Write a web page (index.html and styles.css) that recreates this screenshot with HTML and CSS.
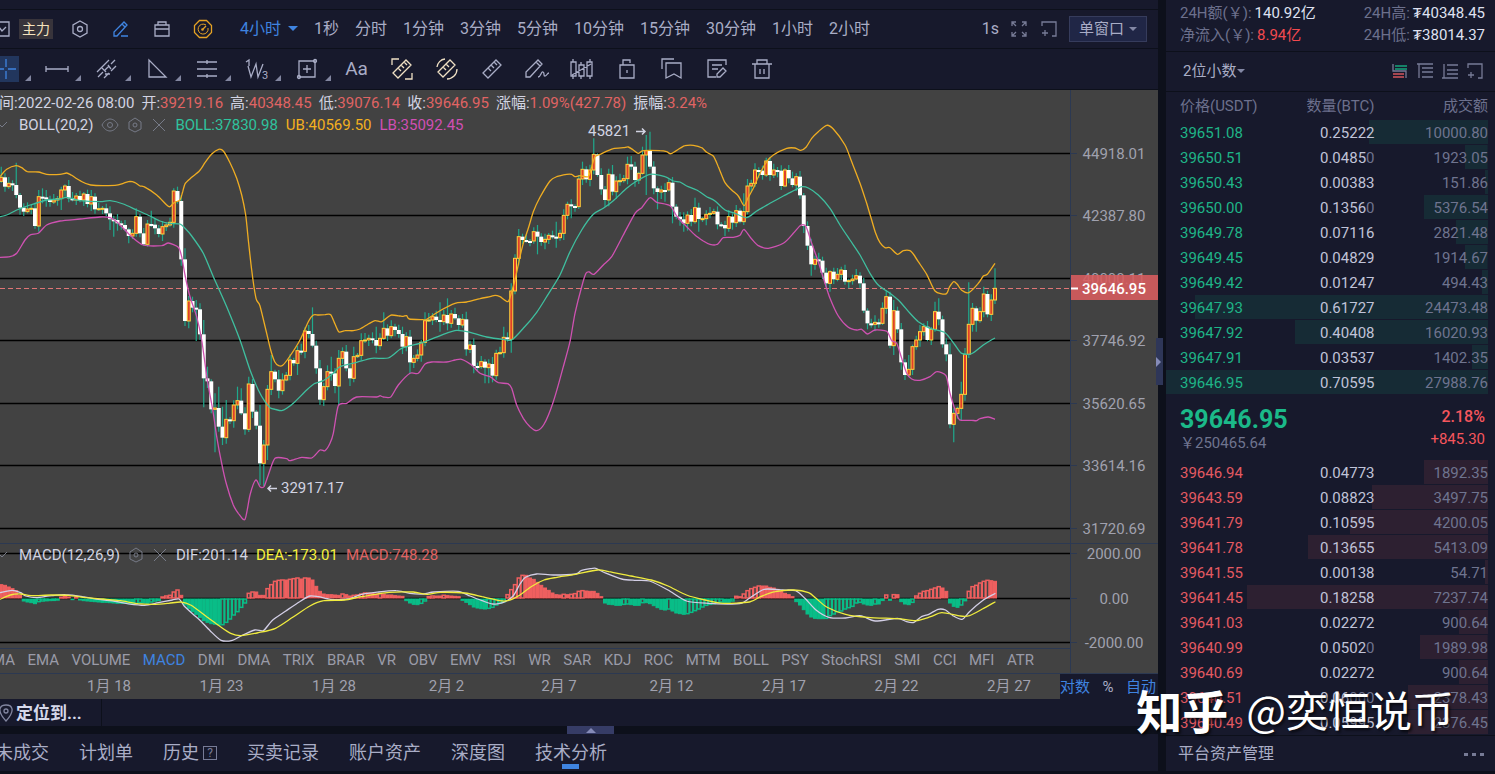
FILE: index.html
```html
<!DOCTYPE html>
<html lang="zh-CN">

<head>
    <meta charset="UTF-8">
    <meta name="viewport" content="width=device-width, initial-scale=1.0">
    <title>BTC/USDT</title>
    <link rel="stylesheet" href="styles.css">
</head>

<body>
    <div class="layout">
        <main class="left">
            <div class="top-strip"></div>

            <div class="toolbar">
                <button class="icon-btn cut" aria-label="指标"><svg width="18" height="16" viewBox="0 0 18 16"><path d="M1 1h16v14H1zM4 9l3-3 3 4 4-4"/></svg></button>
                <button class="main-force">主力</button>
                <div class="tools">
                    <button class="icon-btn" aria-label="设置"><svg width="18" height="18" viewBox="0 0 18 18"><path d="M9 1l7 4v8l-7 4-7-4V5z"/><circle cx="9" cy="9" r="2.5"/></svg></button>
                    <button class="icon-btn blue" aria-label="画线"><svg width="18" height="18" viewBox="0 0 18 18"><path d="M2 16v-4L12 2l3 3L5 16zM10 4l3 3M9 16h7"/></svg></button>
                    <button class="icon-btn" aria-label="模板"><svg width="18" height="18" viewBox="0 0 18 18"><path d="M2 5h14v11H2zM2 9h14M5 5V2h8v3"/></svg></button>
                    <button class="icon-btn gold" aria-label="预警"><svg width="20" height="20" viewBox="0 0 20 20"><path d="M6.500 1.500h7l5 5v7l-5 5h-7l-5-5v-7z"/><path class="thin" d="M13 6a5 5 0 1 0 2 3"/><path d="M10 10l3-3"/><circle cx="9.500" cy="10.500" r=".7"/></svg></button>
                </div>
                <nav class="periods">
                    <button class="active">4小时<i class="caret"></i></button>
                    <button>1秒</button>
                    <button>分时</button>
                    <button>1分钟</button>
                    <button>3分钟</button>
                    <button>5分钟</button>
                    <button>10分钟</button>
                    <button>15分钟</button>
                    <button>30分钟</button>
                    <button>1小时</button>
                    <button>2小时</button>
                </nav>
                <div class="window-tools">
                    <button>1s</button>
                    <button class="icon-btn dim" aria-label="全屏"><svg width="16" height="16" viewBox="0 0 16 16"><path d="M1 5V1h4M11 1h4v4M15 11v4h-4M5 15H1v-4M1 1l4 4M15 1l-4 4M15 15l-4-4M1 15l4-4"/></svg></button>
                    <button class="icon-btn dim" aria-label="新窗口"><svg width="16" height="16" viewBox="0 0 16 16"><path d="M1 5V1h14v14h-4M4 9v6M1 12h6"/></svg></button>
                    <label class="select boxed"><select aria-label="窗口"><option>单窗口</option></select><i class="caret"></i></label>
                </div>
            </div>

            <div class="toolbar draw-bar">
                <button class="draw first on" aria-label="十字线"><svg width="19" height="26" viewBox="0 0 19 26"><path d="M6 3v8M6 15v8M0 13h4M8 13h8"/></svg></button>
                <button class="draw more" aria-label="线段"><svg width="24" height="24" viewBox="0 0 24 24"><path d="M1 12h22M1 9v6M23 9v6"/></svg></button>
                <button class="draw more" aria-label="平行线"><svg width="24" height="24" viewBox="0 0 24 24"><path d="M2 15L14 3M3 20l5-5M10 13l4-4M16 7l4-4M9 21l5-5M16 14l5-5M7 11l4 4M13 8l3 4M10 17h5"/></svg></button>
                <button class="draw more" aria-label="三角形"><svg width="24" height="24" viewBox="0 0 24 24"><path d="M4 3v17h17z"/></svg></button>
                <button class="draw more" aria-label="斐波那契"><svg width="24" height="24" viewBox="0 0 24 24"><path d="M2 5h20M2 12h20M2 19h20M12 3v4M12 17v4"/></svg></button>
                <button class="draw more" aria-label="波浪"><svg width="26" height="24" viewBox="0 0 26 24"><path d="M2 5l3-2v6M4 9l3 11 5-13 2 13 5-13"/><text x="18" y="22" class="sub">3</text></svg></button>
                <button class="draw more" aria-label="矩形"><svg width="24" height="24" viewBox="0 0 24 24"><path d="M4 4h16v16H4zM12 8v8M8 12h8"/><circle cx="20" cy="4" r="1.500"/><circle cx="4" cy="20" r="1.500"/></svg></button>
                <div class="draw-simple">
                    <button class="draw aa">Aa</button>
                    <button class="draw cream" aria-label="测量区间"><svg width="24" height="24" viewBox="0 0 24 24"><path d="M2 8V2h7M22 16v6h-7M3 16L16 3l5 5L8 21zM8 11l3 3M11 8l3 3M14 5l3 3"/></svg></button>
                    <button class="draw cream" aria-label="测量圆"><svg width="24" height="24" viewBox="0 0 24 24"><path d="M3 15L15 3l5 5L8 20zM8 10l3 3M11 7l3 3M2 10a9 9 0 0 1 8-8M22 12a10 10 0 0 1-10 10"/></svg></button>
                    <button class="draw" aria-label="尺子"><svg width="24" height="24" viewBox="0 0 24 24"><path d="M3 16L16 3l5 5L8 21zM8 11l3 3M11 8l3 3M14 5l3 3"/></svg></button>
                    <button class="draw" aria-label="画笔"><svg width="26" height="24" viewBox="0 0 26 24"><path d="M2 20v-5L14 3l4 4L6 20zM12 5l4 4M14 20c3 0 3-6 5-5s0 4 2 4 2-3 4-3"/></svg></button>
                    <button class="draw" aria-label="K线形态"><svg width="24" height="24" viewBox="0 0 24 24"><path d="M1 5h5v14H1zM9 8h5v11H9zM17 5h5v14h-5zM3 2v3M3 19v3M11 5v3M11 19v3M20 2v3M20 19v3M2 18L21 7"/></svg></button>
                    <button class="draw" aria-label="锁定"><svg width="24" height="24" viewBox="0 0 24 24"><path d="M5 8h14v13H5zM8 8V3h7v3M12 13v3"/></svg></button>
                    <button class="draw" aria-label="书签"><svg width="24" height="24" viewBox="0 0 24 24"><path d="M6 6h15v15l-7-4-8 4zM2 12V2h12"/></svg></button>
                    <button class="draw" aria-label="笔记"><svg width="24" height="24" viewBox="0 0 24 24"><path d="M21 8V3H3v17h8M7 8h10M7 12h6M12 20v-3l6-6 3 3-6 6z"/></svg></button>
                    <button class="draw" aria-label="删除"><svg width="24" height="24" viewBox="0 0 24 24"><path d="M2 7h20M5 7v14h14V7M7 7V3h10v4M10 12v5M14 12v5"/></svg></button>
                </div>
            </div>

            <section class="chart">
                <div class="plot">
                    <svg id="pricePlot" class="plot-svg"></svg>
                    <div class="legend">
                        <p class="ohlc">
                            <span>间:2022-02-26 08:00</span>
                            <span>开:<b>39219.16</b></span>
                            <span>高:<b>40348.45</b></span>
                            <span>低:<b>39076.14</b></span>
                            <span>收:<b>39646.95</b></span>
                            <span>涨幅:<b>1.09%(427.78)</b></span>
                            <span>振幅:<b>3.24%</b></span>
                        </p>
                        <p>
                            <svg class="tick" width="11" height="8" viewBox="0 0 11 8"><path d="M0 4l2 2 5-5"/></svg>
                            <span>BOLL(20,2)</span>
                            <svg width="18" height="16" viewBox="0 0 18 16"><path d="M1 8c4-8 12-8 16 0-4 8-12 8-16 0z"/><circle cx="9" cy="8" r="2.500"/></svg>
                            <svg width="16" height="16" viewBox="0 0 16 16"><path d="M8 1l6 4v7l-6 3-6-3V5z"/><circle cx="8" cy="8" r="2"/></svg>
                            <svg width="16" height="16" viewBox="0 0 16 16"><path d="M2 2l12 12M14 2L2 14"/></svg>
                            <span class="mid">BOLL:37830.98</span>
                            <span class="ub">UB:40569.50</span>
                            <span class="lb">LB:35092.45</span>
                        </p>
                    </div>
                </div>
                <svg id="priceAxis" class="axis-svg"></svg>

                <div class="plot macd">
                    <svg id="macdPlot" class="plot-svg"></svg>
                    <div class="legend">
                        <p>
                            <svg class="tick" width="11" height="8" viewBox="0 0 11 8"><path d="M0 4l2 2 5-5"/></svg>
                            <span>MACD(12,26,9)</span>
                            <svg width="16" height="16" viewBox="0 0 16 16"><path d="M8 1l6 4v7l-6 3-6-3V5z"/><circle cx="8" cy="8" r="2"/></svg>
                            <svg width="16" height="16" viewBox="0 0 16 16"><path d="M2 2l12 12M14 2L2 14"/></svg>
                            <span>DIF:201.14</span>
                            <span class="dea">DEA:-173.01</span>
                            <span class="red">MACD:748.28</span>
                        </p>
                    </div>
                </div>
                <svg id="macdAxis" class="axis-svg macd"></svg>

                <nav class="indicators">
                    <button>MA</button><button>EMA</button><button>VOLUME</button><button class="active">MACD</button><button>DMI</button><button>DMA</button><button>TRIX</button><button>BRAR</button><button>VR</button><button>OBV</button><button>EMV</button><button>RSI</button><button>WR</button><button>SAR</button><button>KDJ</button><button>ROC</button><button>MTM</button><button>BOLL</button><button>PSY</button><button>StochRSI</button><button>SMI</button><button>CCI</button><button>MFI</button><button>ATR</button>
                </nav>
                <div class="axis-foot"></div>
            </section>
            <div class="dates">
                <svg id="dateAxis"></svg>
                <div class="scale">
                    <button class="active">对数</button>
                    <button>%</button>
                    <button class="active">自动</button>
                </div>
            </div>

            <div class="locate">
                <button><svg width="14" height="18" viewBox="0 0 14 18"><path d="M6 17C-4 6 0 1 6 1s10 5 0 16z"/><circle cx="6" cy="7" r="2"/></svg>定位到...</button>
            </div>
            <div class="splitter"><button class="fold" aria-label="展开"><i></i></button></div>
            <nav class="tabs">
                <button>未成交</button>
                <button>计划单</button>
                <button>历史<span class="help">?</span></button>
                <button>买卖记录</button>
                <button>账户资产</button>
                <button>深度图</button>
                <button class="active">技术分析</button>
            </nav>
        </main>

        <div class="gutter"><button class="side-fold" aria-label="收起"><i></i></button></div>

        <aside class="book">
            <dl class="stats">
                <div><dt>24H额(￥):</dt><dd>140.92亿</dd></div>
                <div><dt>24H高:</dt><dd>₮40348.45</dd></div>
                <div><dt>净流入(￥):</dt><dd class="down">8.94亿</dd></div>
                <div><dt>24H低:</dt><dd>₮38014.37</dd></div>
            </dl>
            <div class="precision">
                <label class="select"><select aria-label="小数位"><option>2位小数</option></select><i class="caret"></i></label>
                <div class="book-views">
                    <button aria-label="买卖盘"><svg width="16" height="16" viewBox="0 0 16 16"><path class="g" d="M3 3h12M3 6h12"/><path d="M1 1v7h13v7"/><path class="r" d="M1 11h11M1 14h11"/></svg></button>
                    <button aria-label="买盘"><svg width="16" height="16" viewBox="0 0 16 16"><path d="M0 1h16M2 1v14M5 5h11M5 9h11M5 14h11"/></svg></button>
                    <button aria-label="卖盘"><svg width="16" height="16" viewBox="0 0 16 16"><path d="M2 1v14M0 15h16M5 2h11M5 7h11M5 11h11"/></svg></button>
                    <button aria-label="新窗口"><svg width="16" height="16" viewBox="0 0 16 16"><path d="M1 5V1h14v14h-4M4 9v6M1 12h6"/></svg></button>
                </div>
            </div>
            <table class="orders">
                <thead>
                    <tr>
                        <th>价格(USDT)</th>
                        <th>数量(BTC)</th>
                        <th>成交额</th>
                    </tr>
                </thead>
                <tbody id="asks" class="asks"></tbody>
            </table>
            <div class="last">
                <div>
                    <strong>39646.95</strong>
                    <span>￥250465.64</span>
                </div>
                <div class="change">
                    <b>2.18%</b>
                    <span>+845.30</span>
                </div>
            </div>
            <table class="orders">
                <tbody id="bids" class="bids"></tbody>
            </table>
            <div class="assets">
                <span>平台资产管理</span>
                <button aria-label="更多"><i></i><i></i><i></i></button>
            </div>
        </aside>

        <div class="watermark"><b>知乎</b><span>@奕恒说币</span></div>
    </div>

    <script src="chart.js"></script>
</body>

</html>
```

FILE: styles.css
```css
* {
    box-sizing: border-box;
}

body {
    margin: 0;
    background-color: #0d101b;
    color: #a9adc6;
    font-family: Roboto, "Noto Sans CJK SC", sans-serif;
    font-size: 15px;
    line-height: 20px;
    overflow-x: hidden;
}

button,
select {
    font: inherit;
    color: inherit;
    background: none;
    border: none;
    padding: 0;
    margin: 0;
    white-space: nowrap;
    cursor: pointer;
}

select {
    appearance: none;
}

p,
dl,
dd {
    margin: 0;
}

svg {
    display: block;
    flex: none;
}

button svg,
.legend p svg {
    fill: none;
    stroke: currentColor;
    stroke-width: 1.3;
}

.layout {
    position: relative;
    display: grid;
    grid-template-columns: minmax(0, 1fr) 8px 329px;
    overflow: hidden;
}

.left {
    min-width: 0;
}

.caret {
    display: inline-block;
    border: 5px solid transparent;
    border-top-color: currentColor;
    border-bottom: none;
}

/* toolbars */
.top-strip {
    height: 10px;
    background-color: #17192c;
    border-bottom: 1px solid #0d101b;
}

.toolbar {
    display: flex;
    align-items: center;
    height: 39px;
    background-color: #17192c;
    border-bottom: 1px solid #0d101b;
    font-size: 16px;
}

.icon-btn {
    display: flex;
    align-items: center;
    justify-content: center;
    width: 20px;
}

.cut {
    margin-left: -9px;
}

.main-force {
    height: 20px;
    margin-left: 8px;
    padding: 0 3px;
    background-color: #38343b;
    color: #f5e3bd;
    font-size: 14px;
}

.tools {
    display: flex;
    gap: 21px;
    margin-left: 17px;
}

.tools .thin {
    stroke-width: 1;
}

.blue,
.active {
    color: #3f84e0;
}

.gold {
    color: #e5a224;
}

.dim {
    color: #777b96;
}

.periods {
    display: flex;
    gap: 16px;
    margin-left: 27px;
}

.periods .caret {
    margin-left: 7px;
    vertical-align: 3px;
}

.window-tools {
    display: flex;
    align-items: center;
    gap: 10px;
    margin-left: auto;
    margin-right: 11px;
}

.select {
    display: flex;
    align-items: center;
}

.select .caret {
    border-width: 4px;
    border-bottom: none;
    color: #8388a5;
    pointer-events: none;
}

.boxed {
    height: 26px;
    padding: 0 9px;
    gap: 4px;
    background-color: #202646;
    border: 1px solid #363c5c;
}

.boxed select {
    font-size: 15px;
}

.draw-bar {
    height: 41px;
}

.draw {
    position: relative;
    display: flex;
    align-items: center;
    justify-content: center;
    width: 45px;
    height: 40px;
}

.more {
    width: 50px;
}

.first {
    width: 32px;
    justify-content: flex-start;
}

.first svg {
    background-color: #22365d;
    color: #3f84e0;
}

.first::after,
.more::after {
    content: "";
    position: absolute;
    right: 1px;
    bottom: 8px;
    border: 3px solid #8286a0;
    border-top-color: transparent;
    border-left-color: transparent;
}

.draw-simple {
    display: flex;
    margin-left: 2px;
}

.aa {
    font-size: 19px;
}

.sub {
    font-size: 11px;
    fill: currentColor;
    stroke: none;
}

.cream {
    color: #efe0c4;
}

/* chart */
.chart {
    display: grid;
    grid-template-columns: minmax(0, 1fr) 87px;
    background-color: #424242;
}

.plot {
    position: relative;
    height: 453px;
    overflow: hidden;
    border-right: 1px solid #2c3952;
}

.plot-svg {
    width: 100%;
    height: 100%;
}

.axis-svg {
    width: 87px;
    height: 453px;
    overflow: visible;
}

.plot.macd,
.axis-svg.macd {
    height: 105px;
    border-top: 1px solid #2c3952;
}

.legend {
    position: absolute;
    top: 2px;
    left: 0;
    color: #d2d4e2;
}

.macd .legend {
    top: 0;
}

.legend p {
    display: flex;
    align-items: center;
    gap: 8px;
    height: 22px;
    white-space: nowrap;
}

.legend b {
    color: #e06464;
    font-weight: normal;
}

.legend p svg {
    color: #777b88;
    stroke-width: 1;
}

.legend .ohlc {
    gap: 7px;
    margin-left: -1px;
}

.mid {
    color: #2fc39e;
}

.ub {
    color: #f3b01f;
}

.lb {
    color: #d04fb4;
}

.dea {
    color: #f6f03c;
}

.red {
    color: #e06464;
}

.up-candle {
    fill: #e0402a;
    stroke: #ffd23c;
}

.down-candle {
    fill: #fff;
}

.wick {
    stroke: #1fa98c;
    stroke-width: 1.2;
}

.grid {
    stroke: #000;
    stroke-width: 1.5;
}

.notch {
    stroke: #2c3952;
}

.line {
    fill: none;
    stroke-width: 1.3;
}

.line-upper {
    stroke: #efad22;
}

.line-middle {
    stroke: #3fbf9f;
}

.line-lower {
    stroke: #cf52b2;
}

.line-dif {
    stroke: #d3cfe6;
}

.line-dea {
    stroke: #f0ec3e;
}

.now-line {
    stroke: #e07575;
    stroke-dasharray: 5 3;
}

.hist-up {
    fill: #ef5f5f;
    stroke: #ef5f5f;
}

.hist-down {
    fill: #09bd87;
    stroke: #09bd87;
}

.hist-up.hollow,
.hist-down.hollow {
    fill: #424242;
    stroke-width: 1.5;
}

.mark-text {
    fill: #d2d4e2;
}

.mark-arrow {
    fill: none;
    stroke: #d2d4e2;
    stroke-width: 1.5;
}

.axis-text {
    fill: #a0a1ae;
    text-anchor: middle;
}

.now-tag {
    fill: #d95c5e;
    fill-opacity: .88;
}

.now-text {
    fill: #fff;
    font-weight: 500;
    text-anchor: middle;
}

.now-tick {
    stroke: #fff;
    stroke-width: 2;
}

.indicators {
    display: flex;
    justify-content: space-between;
    height: 25px;
    margin-left: -8px;
    padding: 0 36px 2px 0;
    border-top: 1px solid #2c3952;
    border-right: 1px solid #2c3952;
    color: #9a9ba8;
    overflow: hidden;
}

.indicators .active {
    color: #3f84e0;
}

.dates {
    display: flex;
    height: 26px;
    background-color: #424242;
    border-top: 1px solid #2c3952;
}

#dateAxis {
    flex: 1;
    width: 0;
    height: 25px;
}

.scale {
    display: flex;
    justify-content: space-between;
    width: 98px;
    padding-right: 2px;
    background-color: #17192c;
}

.scale button {
    font-size: 15px;
}

/* bottom */
.locate {
    display: flex;
    height: 27px;
    background-color: #17192c;
}

.locate button {
    display: flex;
    align-items: center;
    gap: 2px;
    width: 102px;
    border-right: 1px solid #0d101b;
    color: #d5d8ea;
    font-size: 17px;
    font-weight: bold;
}

.locate svg {
    color: #8286a0;
}

.splitter {
    position: relative;
    height: 8px;
}

.fold {
    position: absolute;
    left: 49%;
    width: 47px;
    height: 8px;
    background-color: #363c66;
    display: flex;
    align-items: center;
    justify-content: center;
}

.fold i {
    border: 5px solid transparent;
    border-bottom-color: #858bb8;
    border-top: none;
}

.tabs {
    display: flex;
    gap: 30px;
    height: 37px;
    margin-left: -5px;
    background-color: #17192c;
    font-size: 18px;
}

.tabs button {
    position: relative;
    display: flex;
    align-items: center;
}

.tabs .active {
    color: #a9adc6;
}

.tabs .active::after {
    content: "";
    position: absolute;
    left: 50%;
    bottom: 2px;
    width: 17px;
    height: 5px;
    margin-left: -9px;
    background-color: #3f84e0;
}

.help {
    width: 14px;
    height: 14px;
    margin-left: 4px;
    border: 1px solid #777b96;
    color: #777b96;
    font-size: 12px;
    line-height: 13px;
}

.gutter {
    position: relative;
}

.side-fold {
    position: absolute;
    top: 338px;
    left: -2px;
    width: 7px;
    height: 47px;
    background-color: #2e3658;
}

.side-fold i {
    display: block;
    width: 0;
    border: 5px solid transparent;
    border-left-color: #858bb8;
    border-right: none;
}

/* order book */
.book {
    background-color: #17192c;
    height: 771px;
}

.stats {
    display: grid;
    grid-template-columns: auto auto;
    justify-content: space-between;
    align-content: start;
    row-gap: 2px;
    height: 52px;
    padding: 3px 10px 0 14px;
    border-bottom: 1px solid #0d101b;
}

.stats div {
    display: flex;
    gap: 3px;
    height: 20px;
}

.stats dt,
.orders th {
    color: #6c708c;
}

.stats dd {
    color: #dfe1f0;
}

.stats .down {
    color: #f2494f;
}

.precision {
    display: flex;
    align-items: center;
    justify-content: space-between;
    height: 40px;
    padding: 0 12px 2px 17px;
    border-bottom: 1px solid #0d101b;
}

.book-views {
    display: flex;
    gap: 9px;
    color: #777b96;
}

.book-views .g {
    stroke: #17a57c;
}

.book-views .r {
    stroke: #d6565c;
}

.orders {
    width: 322px;
    border-collapse: collapse;
    table-layout: fixed;
}

.orders th,
.orders td {
    height: 25px;
    padding: 0;
    font-weight: normal;
    text-align: right;
}

.orders thead th {
    height: 28px;
}

.orders th:first-child,
.orders td:first-child {
    padding-left: 14px;
    text-align: left;
}

.orders th:nth-child(2),
.orders td:nth-child(2) {
    width: 95px;
}

.orders td:nth-child(2) {
    color: #c0c3d8;
}

.orders td:nth-child(3) {
    color: #6f748f;
}

.orders i {
    color: #6f748f;
    font-style: normal;
}

.asks tr {
    background: linear-gradient(#162b35, #162b35) right top / var(--depth) 24px no-repeat;
}

.bids tr {
    background: linear-gradient(#2d2031, #2d2031) right top / var(--depth) 24px no-repeat;
}

.asks td:first-child {
    color: #1fb487;
}

.bids td:first-child {
    color: #e35a62;
}

.last {
    display: flex;
    justify-content: space-between;
    height: 65px;
    padding: 12px 10px 0 14px;
}

.last div {
    display: flex;
    flex-direction: column;
}

.last strong {
    color: #1bb989;
    font-size: 25px;
    font-weight: bold;
    line-height: 26px;
}

.last span {
    color: #6f748f;
}

.last .change {
    text-align: right;
    gap: 2px;
}

.change b {
    color: #f6565d;
    font-size: 16px;
    font-weight: 500;
}

.last .change span {
    color: #f6565d;
}

.assets {
    display: flex;
    align-items: center;
    justify-content: space-between;
    height: 37px;
    padding: 0 11px 0 12px;
    background-color: #17192c;
    border-top: 1px solid #0d101b;
    font-size: 16px;
}

.assets button {
    display: flex;
    gap: 4px;
}

.assets i {
    width: 4px;
    height: 3px;
    background-color: #777b96;
}

.watermark {
    position: absolute;
    right: 41px;
    bottom: 32px;
    display: flex;
    align-items: center;
    gap: 18px;
    color: #fff;
    font-family: "Noto Sans CJK SC", sans-serif;
    font-size: 42px;
    line-height: 60px;
    text-shadow: 2px 2px 3px rgba(0, 0, 0, .7);
    pointer-events: none;
}

.watermark b {
    font-size: 46px;
}
```

FILE: chart.js
```js
const NS = 'http://www.w3.org/2000/svg';
const FIRST_X = 1.25;
const STEP = 3.75;

// levels in thirds of a pixel, from the top down
const closes = [
    112, 140, 130, 135, 165, 203, 215, 207, 205, 258, 170, 172, 178, 186, 180, 176, 150, 138, 175, 180,
    168, 180, 162, 192, 170, 208, 206, 205, 220, 238, 240, 250, 255, 268, 288, 280, 230, 280, 313, 252,
    254, 265, 282, 260, 255, 247, 153, 183, 358, 543, 483, 503, 508, 583, 715, 724, 808, 804, 860, 893,
    838, 842, 795, 782, 820, 868, 732, 815, 857, 970, 915, 748, 695, 718, 752, 720, 706, 660, 670, 632,
    634, 573, 582, 617, 685, 779, 740, 695, 700, 738, 655, 635, 685, 715, 650
].map(v => v + 90).concat([
    736, 692, 690, 685, 690, 707, 685, 655, 677, 650, 660, 672, 710, 680, 757, 745, 735, 697, 632, 630,
    620, 630, 635, 615, 640, 612, 625, 645, 628, 718, 705, 768, 770, 755, 773, 762, 797, 730, 728, 682,
    688, 543, 445, 380, 390, 393, 393, 365, 380, 396, 388, 376, 380, 383, 370, 316, 283, 288, 290, 207,
    178, 208, 180, 133, 195, 238, 270, 193, 245, 213, 212, 206, 163, 170, 210, 190, 135, 122, 170, 235,
    246, 240, 240, 218, 290, 320, 328, 340, 315, 335, 293, 327, 326, 313, 310, 305, 343, 345, 355, 320,
    338, 302, 335, 305, 228, 220, 180, 182, 195, 153, 195, 180, 182, 228, 180, 205, 225, 200, 256, 348,
    407, 463, 448, 452, 488, 520, 485, 508, 493, 480, 515, 512, 507, 497, 520, 602, 640, 643, 637, 640,
    595, 560, 707, 602, 658, 757, 795, 778, 710, 690, 665, 650, 690, 658, 605, 628, 703, 733, 943, 910,
    895, 853, 733, 643, 595, 632, 605, 552, 613, 570, 535
]);

// [high, low] of the candles with long wicks, null = short one
const wicks = {
    0: [170, null], 4: [158, null], 10: [240, 365], 11: [235, 280], 12: [240, null], 16: [230, 300],
    18: [210, null], 29: [null, 360], 30: [null, 380], 34: [null, 400], 36: [295, 380], 39: [330, 410],
    40: [302, null], 46: [235, null], 47: [230, null], 49: [415, 648], 51: [560, null], 52: [570, 693],
    53: [580, null], 54: [630, 892], 55: [770, null], 57: [850, 1027], 58: [830, null], 59: [890, 1005],
    60: [870, null], 63: [830, null], 64: [835, null], 66: [800, null], 69: [885, 1125], 70: [990, 1128],
    71: [825, 1050], 72: [735, null], 74: [780, 865], 79: [null, 795], 83: [592, null], 85: [750, 885],
    88: [740, null], 89: [null, 850], 90: [720, 885], 93: [null, 828], 94: [710, null], 96: [670, null],
    100: [650, 730], 102: [607, null], 107: [650, null], 109: [null, 790], 113: [607, null],
    117: [577, 665], 119: [565, null], 124: [605, null], 129: [null, 820], 130: [null, 820],
    134: [650, null], 136: [520, 728], 138: [357, null], 143: [null, 433], 148: [335, 413],
    152: [null, 325], 155: [155, null], 158: [85, null], 159: [130, null], 161: [null, 290],
    163: [165, null], 167: [140, null], 168: [138, null], 171: [110, null], 172: [75, 255],
    173: [65, null], 175: [null, 298], 177: [null, 275], 179: [null, 340], 182: [null, 365],
    185: [263, null], 186: [null, 365], 193: [null, 378], 198: [250, 345], 201: [160, null],
    204: [143, null], 208: [null, 240], 210: [165, null], 216: [null, 497], 218: [428, null],
    219: [440, null], 221: [null, 545], 224: [470, null], 236: [540, null], 238: [570, 735],
    241: [null, 810], 242: [735, null], 245: [645, null], 249: [575, null], 250: [565, null],
    253: [700, 955], 254: [null, 997], 256: [815, 930], 258: [517, null], 260: [null, 665],
    262: [530, null], 265: [475, null]
};

const bands = {
    upper: [
        [0, 50, [0,110, 20,88, 48,77, 65,83, 82,95, 115,96, 140,103, 180,103, 200,99, 215,106, 240,122, 272,135, 345,136, 370,130, 390,124, 405,128, 420,138, 432,140, 470,165, 500,195, 510,200, 522,188, 540,180, 548,155, 556,130, 575,112, 598,93, 615,68, 635,42, 656,28, 670,33, 690,68, 710,115, 725,165, 737,225, 745,300, 755,390, 768,475, 780,498, 800,580, 812,630, 824,665, 836,677, 848,676, 870,648, 900,600, 925,545, 940,525, 955,525, 975,524, 992,524, 1005,552, 1017,576]],
        [340, 20, [15,662, 40,662, 60,657, 85,642, 105,632, 125,635, 145,620, 155,615, 180,618, 190,619, 200,617, 208,627, 250,629, 260,628, 300,602, 345,580, 380,576, 420,566, 450,560, 465,556, 480,560, 504,575, 515,545, 525,510, 540,440, 550,400, 565,355, 580,305, 600,262, 630,213, 650,200, 680,193, 695,193, 705,200, 720,197, 745,200, 755,170, 765,140, 780,133, 820,116, 850,113, 865,111, 880,120, 895,130, 910,122, 960,122, 980,125, 993,131]],
        [680, 20, [0,115, 15,107, 40,106, 65,113, 80,127, 100,138, 115,170, 135,218, 155,240, 175,258, 192,287, 205,262, 220,235, 235,200, 260,155, 280,135, 320,115, 345,114, 362,121, 378,112, 395,85, 415,65, 440,46, 460,57, 495,105, 515,155, 540,220, 560,280, 575,330, 587,370, 600,398, 615,413, 630,413, 652,433, 670,422, 690,422, 702,435, 715,455, 740,493, 765,543, 798,552, 808,532, 821,515, 832,523, 845,541, 866,548, 895,520, 910,498, 922,493, 945,460]]
    ],
    middle: [
        [0, 50, [0,230, 20,225, 50,210, 90,195, 140,180, 180,177, 200,172, 240,182, 300,185, 330,182, 370,192, 410,210, 450,228, 480,243, 510,250, 540,252, 555,265, 575,288, 610,340, 640,410, 680,500, 720,600, 750,690, 775,750, 795,785, 810,803, 825,808, 845,812, 860,805, 885,785, 920,750, 945,730, 970,722, 1000,700]],
        [340, 20, [0,770, 50,757, 95,745, 145,744, 180,718, 210,707, 250,697, 310,673, 350,661, 390,667, 440,681, 490,688, 515,690, 550,655, 590,607, 620,560, 660,495, 690,425, 725,360, 760,313, 790,295, 820,272, 860,235, 890,213, 930,193, 975,200, 1000,213]],
        [680, 20, [0,216, 20,228, 50,240, 80,260, 105,273, 135,300, 165,310, 200,323, 230,303, 270,280, 310,258, 345,240, 365,230, 385,234, 415,255, 450,295, 480,345, 510,390, 540,435, 570,490, 595,525, 630,550, 660,575, 690,610, 715,635, 750,655, 795,668, 825,705, 845,730, 875,731, 910,705, 930,692, 945,684]]
    ],
    lower: [
        [0, 50, [0,352, 30,350, 50,340, 75,300, 92,284, 115,280, 140,255, 180,243, 240,237, 300,231, 330,233, 350,245, 370,265, 395,290, 430,315, 485,317, 505,309, 535,322, 545,350, 555,405, 570,470, 590,530, 605,600, 622,720, 640,820, 650,890, 665,970, 680,1035, 700,1095, 715,1120, 735,1138, 750,1065, 767,1020, 780,1040, 792,1040, 805,1005, 825,955, 860,956, 870,962, 905,952, 935,954, 960,930, 975,932, 990,910, 1000,880, 1015,797]],
        [340, 20, [20,880, 50,861, 110,861, 120,857, 130,861, 152,861, 175,825, 210,790, 235,790, 255,762, 275,756, 320,756, 345,750, 365,748, 395,765, 420,790, 450,800, 475,818, 503,821, 515,835, 530,885, 550,925, 570,950, 590,962, 612,943, 640,875, 670,770, 690,695, 705,610, 725,530, 738,490, 748,486, 762,493, 790,465, 815,440, 850,375, 885,310, 905,293, 930,263, 950,277, 990,287, 1008,315]],
        [680, 20, [0,330, 20,350, 45,375, 70,393, 90,403, 112,403, 130,383, 160,382, 180,376, 192,358, 215,387, 235,407, 265,415, 310,400, 340,370, 362,346, 378,350, 395,400, 415,455, 432,510, 450,565, 475,618, 505,652, 530,660, 545,658, 562,672, 585,660, 620,664, 635,692, 650,700, 665,745, 680,790, 695,807, 720,811, 750,800, 770,785, 798,797, 810,850, 835,925, 850,931, 875,931, 890,932, 900,926, 925,921, 945,928]]
    ]
};

const histogram = [
    40, 38, 33, 28, 22, 8, -6, -9, -11, -14, -8, -6, -5, -5, -4, -3, 2, 4, 3, -2,
    2, -3, -5, -6, -7, -8, -9, -10, -10, -11, -12, -13, -13, -13, -14, -15, -13, -11, -12, -13,
    -9, -6, -4, 3, 6, 8, 18, 24, 8, -18, -28, -38, -46, -55, -65, -70, -74, -76, -78, -77,
    -70, -60, -48, -38, -25, -12, 14, 18, 18, 8, 8, 28, 40, 50, 53, 54, 54, 56, 58, 60,
    57, 60, 60, 54, 35, 20, 12, 10, 10, 9, 8, 12, 10, 6, 8, 9, 12, 15, 15, 14,
    12, 13, 12, 9, 9, 7, 6, 5, -5, -12, -16, -17, -13, -6, 4, 6, 6, 6, 8, 7,
    6, 5, 4, -4, -10, -17, -24, -27, -29, -30, -28, -25, -18, -12, -8, 10, 25, 40, 60, 68,
    68, 60, 56, 47, 38, 30, 23, 15, 10, 9, 11, 10, 11, 13, 20, 22, 21, 20, 20, 14,
    4, -12, -16, -17, -19, -19, -16, -15, -17, -19, -19, -11, -11, -14, -20, -26, -31, -33, -30, -36,
    -42, -44, -46, -44, -40, -35, -30, -24, -19, -16, -14, -11, -9, -10, -10, -6, 5, 4, 12, 22,
    28, 32, 36, 36, 36, 32, 30, 26, 20, 14, 10, 4, -8, -18, -32, -45, -54, -58, -59, -59,
    -58, -50, -45, -38, -36, -30, -26, -22, -12, -10, -15, -18, -19, -15, -15, -4, 9, -4, 10, 10,
    -8, -15, -17, -10, 6, 14, 20, 22, 26, 30, 34, 30, 20, -12, -22, -25, -18, -5, 20, 34,
    38, 45, 50, 53, 52, 50
];

const macdLines = {
    dif: [
        [0, 2.904, [0,188, 35,181, 60,188, 75,198, 105,203, 150,197, 190,194, 240,200, 280,207, 330,213, 370,221, 420,226, 460,218, 500,210, 520,207, 535,228, 560,252, 580,270, 610,302, 642,331, 675,331, 700,318, 740,300, 765,302, 790,272, 830,243, 870,215, 900,198, 925,200, 960,208, 1010,207, 1050,193, 1100,186, 1150,182, 1190,190, 1230,192, 1260,186, 1330,184, 1365,198, 1400,212, 1430,222, 1460,218, 1490,198]],
        [520, 2.703, [0,162, 15,142, 45,132, 90,135, 150,132, 165,122, 190,116, 205,115, 225,126, 275,147, 310,151, 350,153, 400,180, 450,213, 510,220, 560,222, 600,219, 620,205, 660,178, 710,180, 745,182, 770,205, 800,240, 835,262, 880,264, 920,257, 960,273, 1020,265, 1045,275, 1065,277, 1085,260, 1105,253, 1130,238, 1150,240, 1170,257, 1195,268, 1215,245, 1250,212, 1285,190]]
    ],
    dea: [
        [0, 2.904, [0,208, 30,195, 60,192, 90,197, 150,195, 200,196, 250,203, 300,207, 350,212, 400,221, 450,223, 490,220, 525,216, 555,226, 600,260, 640,290, 670,310, 700,317, 750,308, 800,295, 850,262, 900,228, 940,212, 1000,210, 1050,200, 1130,187, 1200,186, 1240,193, 1280,187, 1350,189, 1400,200, 1450,212, 1475,212]],
        [520, 2.703, [0,195, 30,170, 65,150, 100,142, 150,133, 210,120, 240,125, 300,138, 355,150, 400,168, 450,195, 500,210, 550,220, 620,216, 650,200, 690,185, 740,180, 780,188, 800,205, 830,232, 880,253, 940,262, 1020,266, 1070,272, 1110,260, 1140,248, 1190,258, 1215,257, 1250,237, 1285,215]]
    ]
};

function add(parent, tag, cls, attrs, text) {
    const el = document.createElementNS(NS, tag);
    el.setAttribute('class', cls);
    for (const key in attrs) {
        el.setAttribute(key, attrs[key]);
    }
    if (text) {
        el.textContent = text;
    }
    parent.appendChild(el);
    return el;
}

// smooth path through the points
function curve(points) {
    let d = `M${points[0]}`;
    for (let i = 0; i < points.length - 1; i++) {
        const p0 = points[i - 1] || points[i];
        const p1 = points[i];
        const p2 = points[i + 1];
        const p3 = points[i + 2] || p2;
        const c = [
            p1[0] + (p2[0] - p0[0]) / 8, p1[1] + (p2[1] - p0[1]) / 8,
            p2[0] - (p3[0] - p1[0]) / 8, p2[1] - (p3[1] - p1[1]) / 8
        ].map(v => v.toFixed(1));
        d += `C${c.join(' ')} ${p2[0].toFixed(1)} ${p2[1].toFixed(1)}`;
    }
    return d;
}

function toPoints(x0, scale, y0, flat) {
    const points = [];
    for (let i = 0; i < flat.length; i += 2) {
        points.push([x0 + flat[i] / scale, y0 + flat[i + 1] / 3]);
    }
    return points;
}

function drawPrice() {
    const svg = document.getElementById('pricePlot');
    const axis = document.getElementById('priceAxis');
    const labels = ['44918.01', '42387.80', '40000.11', '37746.92', '35620.65', '33614.16', '31720.69'];

    labels.forEach((label, i) => {
        const y = 63.5 + Math.floor(i * 62.5);
        add(svg, 'line', 'grid', { x1: 0, x2: '100%', y1: y, y2: y });
        add(axis, 'line', 'notch', { x1: 0, x2: 6, y1: y, y2: y });
        add(axis, 'text', 'axis-text', { x: 43, y: y + 5 }, label);
    });

    add(svg, 'line', 'now-line', { x1: 0, x2: '100%', y1: 198.5, y2: 198.5 });

    closes.forEach((close, i) => {
        const open = i ? closes[i - 1] : close + 12;
        const x = FIRST_X + i * STEP;
        const top = Math.min(open, close);
        const bottom = Math.max(open, close);
        const [high, low] = wicks[i] || [null, null];
        const y1 = 20 + (high === null ? top - 5 - (i * 7) % 17 : high) / 3;
        const y2 = 20 + (low === null ? bottom + 4 + (i * 11) % 19 : low) / 3;
        add(svg, 'line', 'wick', { x1: x, x2: x, y1: y1, y2: y2 });
    });
    closes.forEach((close, i) => {
        const open = i ? closes[i - 1] : close + 12;
        const x = FIRST_X + i * STEP;
        const y = 20 + Math.min(open, close) / 3;
        const h = Math.abs(open - close) / 3;
        if (close < open) {
            add(svg, 'rect', 'up-candle', { x: x - 1.5, y: y, width: 3, height: Math.max(h, 1) });
        } else {
            add(svg, 'rect', 'down-candle', { x: x - 2, y: y, width: 4, height: Math.max(h, 2) });
        }
    });

    for (const name in bands) {
        const points = bands[name].flatMap(([x0, y0, flat]) => toPoints(x0, 3, y0, flat));
        add(svg, 'path', 'line line-' + name, { d: curve(points) });
    }

    add(svg, 'text', 'mark-text', { x: 588, y: 46 }, '45821');
    add(svg, 'path', 'mark-arrow', { d: 'M636 41.500h9M642 38.500l3 3-3 3' });
    add(svg, 'text', 'mark-text', { x: 281, y: 403 }, '32917.17');
    add(svg, 'path', 'mark-arrow', { d: 'M277 398.500h-9M271 395.500l-3 3 3 3' });

    add(axis, 'rect', 'now-tag', { x: 0, y: 185, width: 87, height: 25 });
    add(axis, 'line', 'now-tick', { x1: 0, x2: 7, y1: 198.5, y2: 198.5 });
    add(axis, 'text', 'now-text', { x: 43, y: 204 }, '39646.95');
}

function drawMacd() {
    const svg = document.getElementById('macdPlot');
    const axis = document.getElementById('macdAxis');

    [['2000.00', 9.5], ['0.00', 54.5], ['-2000.00', 98.5]].forEach(([label, y]) => {
        add(svg, 'line', 'grid', { x1: 0, x2: '100%', y1: y, y2: y });
        add(axis, 'line', 'notch', { x1: 0, x2: 6, y1: y, y2: y });
        add(axis, 'text', 'axis-text', { x: 43, y: y + 5 }, label);
    });

    histogram.forEach((value, i) => {
        const h = Math.abs(value) / 3;
        const rising = i > 0 && value > histogram[i - 1];
        const cls = (value > 0 ? 'hist-up' : 'hist-down') + (rising ? ' hollow' : '');
        add(svg, 'rect', cls, {
            x: FIRST_X + i * STEP - 1.5,
            y: value > 0 ? 54 - h : 55,
            width: 3,
            height: h
        });
    });

    for (const name in macdLines) {
        const points = macdLines[name].flatMap(([x0, scale, flat]) => toPoints(x0, scale, -14, flat));
        add(svg, 'path', 'line line-' + name, { d: curve(points) });
    }
}

function drawDates() {
    const svg = document.getElementById('dateAxis');
    const dates = ['1月 18', '1月 23', '1月 28', '2月 2', '2月 7', '2月 12', '2月 17', '2月 22', '2月 27'];
    dates.forEach((date, i) => {
        add(svg, 'text', 'axis-text', { x: 109 + i * 30 * STEP, y: 17 }, date);
    });
}

function fillOrders(id, rows) {
    const body = document.getElementById(id);
    rows.forEach(([price, amount, total, depth]) => {
        const row = body.insertRow();
        row.style.setProperty('--depth', depth + '%');
        row.insertCell().textContent = price;
        // trailing zeros are dimmed
        row.insertCell().innerHTML = amount.replace(/(0+)$/, '<i>$1</i>');
        row.insertCell().textContent = total;
    });
}

drawPrice();
drawMacd();
drawDates();

fillOrders('asks', [
    ['39651.08', '0.25222', '10000.80', 37],
    ['39650.51', '0.04850', '1923.05', 7],
    ['39650.43', '0.00383', '151.86', 1],
    ['39650.00', '0.13560', '5376.54', 20],
    ['39649.78', '0.07116', '2821.48', 10],
    ['39649.45', '0.04829', '1914.67', 7],
    ['39649.42', '0.01247', '494.43', 2],
    ['39647.93', '0.61727', '24473.48', 91],
    ['39647.92', '0.40408', '16020.93', 60],
    ['39647.91', '0.03537', '1402.35', 5],
    ['39646.95', '0.70595', '27988.76', 100]
]);

fillOrders('bids', [
    ['39646.94', '0.04773', '1892.35', 20],
    ['39643.59', '0.08823', '3497.75', 36],
    ['39641.79', '0.10595', '4200.05', 43],
    ['39641.78', '0.13655', '5413.09', 56],
    ['39641.55', '0.00138', '54.71', 1],
    ['39641.45', '0.18258', '7237.74', 75],
    ['39641.03', '0.02272', '900.64', 9],
    ['39640.99', '0.05020', '1989.98', 21],
    ['39640.69', '0.02272', '900.64', 9],
    ['39640.51', '0.06000', '2378.43', 25],
    ['39640.49', '0.05995', '2376.45', 25]
]);
```
